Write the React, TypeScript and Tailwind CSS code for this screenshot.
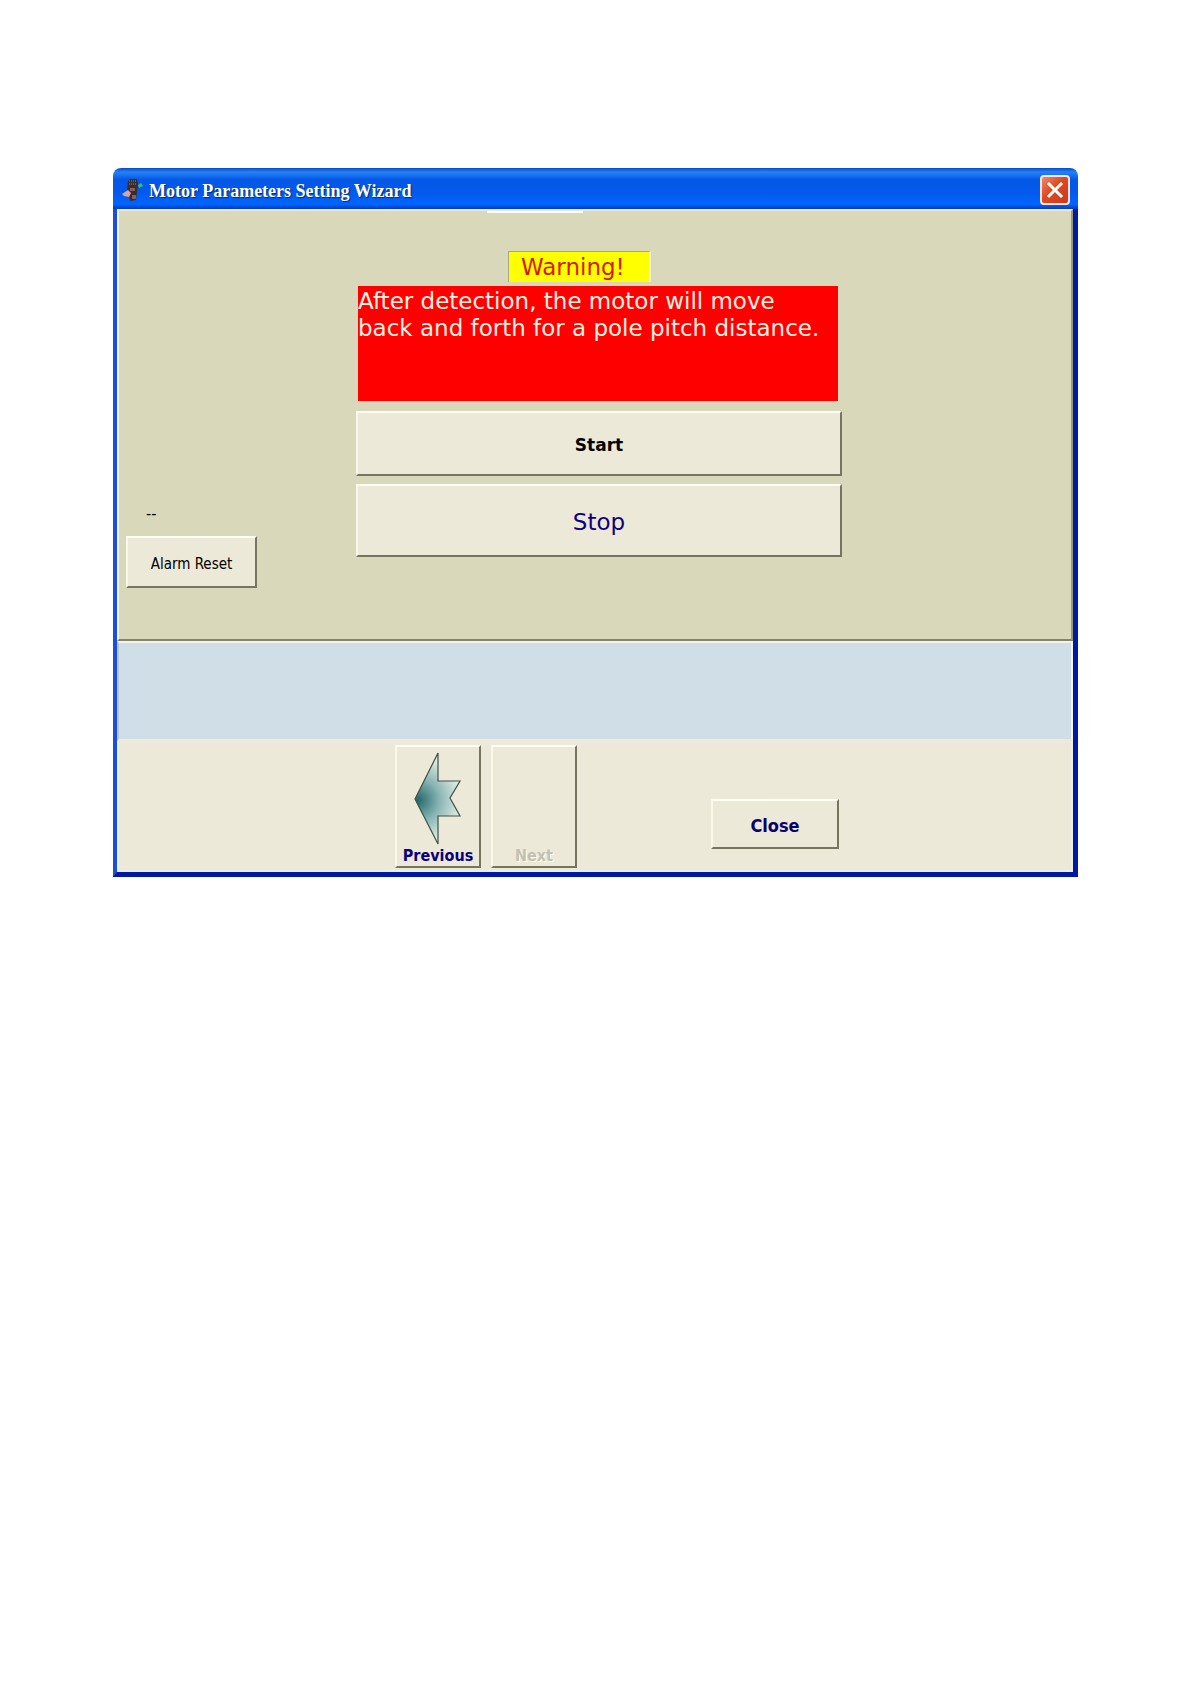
import { ButtonHTMLAttributes } from "react"
import clsx from "clsx"

function PanelButton({ className, children, ...props }: ButtonHTMLAttributes<HTMLButtonElement>) {
  return (
    <button
      type="button"
      className={clsx(
        "border-2 border-t-[#fffff4] border-l-[#fbf8e8] border-r-[#77745f] border-b-[#77745f] bg-[#ece9d8]",
        className
      )}
      {...props}
    >
      {children}
    </button>
  )
}

function MotorIcon() {
  return (
    <svg className="h-6 w-6" viewBox="0 0 24 24" aria-hidden="true">
      <path d="M7 2 9 0H16L17 5 15 21 9 22 8 14 6 11z" fill="#3a2b2e" />
      <path d="M8 2h7M8 5h7" stroke="#9b8c8c" strokeWidth="1" strokeDasharray="1 1" />
      <path d="M1 15 7 11 10 14 8 18 3 17z" fill="#d9a3a3" />
      <path d="M9 9h5v3H9zM11 16h4v4h-4z" fill="#84605c" />
      <path d="M17 6 20 4 22 7 18 9z" fill="#35c25b" />
    </svg>
  )
}

function PreviousArrow() {
  return (
    <svg className="h-24 w-12" viewBox="0 0 48 96" aria-hidden="true">
      <defs>
        <radialGradient id="arrowFill" gradientUnits="userSpaceOnUse" cx="4" cy="50" r="42">
          <stop offset="0" stopColor="#25686a" />
          <stop offset="0.5" stopColor="#86b3b4" />
          <stop offset="1" stopColor="#dce9df" />
        </radialGradient>
      </defs>
      <path
        d="M1 49 24 3V31H46L36 48 46 66H24V94z"
        fill="url(#arrowFill)"
        stroke="#3c5148"
        strokeWidth="1.2"
      />
    </svg>
  )
}

export default function App() {
  return (
    <main className="min-h-screen bg-white pt-[168px] pr-28 pl-[113px] font-['DejaVu_Sans_Condensed','DejaVu_Sans',sans-serif]">
      <section className="overflow-hidden rounded-t-lg">
        {/* Title bar */}
        <header className="flex h-[41px] items-center justify-between bg-linear-[180deg,#0848cf_0%,#2583f5_10%,#0558e6_28%,#0359ec_60%,#0066ff_88%,#003bc0_100%] px-2">
          <div className="flex items-center gap-1 pt-1">
            <MotorIcon />
            <h1 className="font-['Liberation_Serif',serif] text-lg font-bold text-white [text-shadow:1px_1px_1px_#062a7a]">
              Motor Parameters Setting Wizard
            </h1>
          </div>
          <button
            type="button"
            aria-label="Close window"
            className="mt-0.5 flex size-[30px] items-center justify-center rounded border-2 border-[#f5e4e2] bg-linear-[135deg,#ee8a6b,#dd4820_45%,#c93c1b]"
          >
            <svg className="size-5" viewBox="0 0 20 20" aria-hidden="true">
              <path d="M4 4 16 16M16 4 4 16" stroke="#fff" strokeWidth="3" strokeLinecap="square" />
            </svg>
          </button>
        </header>

        <div className="border-r-[5px] border-b-[5px] border-l-4 border-r-[#0019a0] border-b-[#0019a0] border-l-[#1c4fd8]">
          {/* Detection panel */}
          <div className="grid h-[432px] grid-cols-[230px_1fr_222px] border-2 border-t-[#eceadb] border-r-[#99987f] border-b-[#85846f] border-l-[#f4f5ea] bg-[#dad8ba] px-[7px]">
            <div className="flex flex-col items-start justify-end pb-[51px]">
              <p className="pb-3 pl-5 text-base leading-5">--</p>
              <PanelButton className="h-[52px] w-[131px] pt-1 text-[15px]">Alarm Reset</PanelButton>
            </div>
            <div className="flex flex-col">
              <div className="ml-[131px] h-0.5 w-24 bg-[#fbfbf0]" />
              <p className="mt-[38px] ml-[152px] h-[31px] w-[143px] border-t border-r-2 border-l border-t-[#a8a878] border-r-[#f0eee0] border-l-[#a8a878] bg-[#ffff00] pl-3 font-['DejaVu_Sans',sans-serif] text-[23px] leading-[30px] text-[#d81800]">
                Warning!
              </p>
              <p className="mt-1 mr-1 ml-0.5 h-[115px] bg-[#fe0000] pt-0.5 font-['DejaVu_Sans',sans-serif] text-[23px] leading-[27px] text-[#fff3e0]">
                After detection, the motor will move
                <br />
                back and forth for a pole pitch distance.
              </p>
              <PanelButton className="mt-2.5 h-[65px] pt-1 font-['DejaVu_Sans',sans-serif] text-[17px] font-bold text-black">
                Start
              </PanelButton>
              <PanelButton className="mt-2 h-[73px] pt-1 font-['DejaVu_Sans',sans-serif] text-[23px] text-[#100080]">
                Stop
              </PanelButton>
            </div>
          </div>

          {/* Message area */}
          <div className="h-[100px] border-2 border-t-[#f2f3ec] border-r-[#f2f3ec] border-b-[#eeeadb] border-l-[#b9c4c4] bg-[#d0dfe7]" />

          {/* Navigation */}
          <footer className="grid h-[131px] grid-cols-[276px_1fr_232px] border-r-2 border-b-2 border-l-2 border-[#e6f1ee] bg-[#ede9d8]">
            <div />
            <div className="flex justify-between pt-1">
              <div className="flex h-[123px] gap-2.5">
                <PanelButton className="flex w-[86px] flex-col items-center justify-end text-base leading-5 font-bold text-[#08007c]">
                  <PreviousArrow />
                  Previous
                </PanelButton>
                <PanelButton
                  disabled
                  className="flex w-[86px] flex-col items-center justify-end text-base leading-5 font-bold text-[#c4c0ae] [text-shadow:1px_1px_0_#fff]"
                >
                  Next
                </PanelButton>
              </div>
              <PanelButton className="mt-[54px] h-[50px] w-32 pt-1 text-lg leading-6 font-bold text-[#08006c]">
                Close
              </PanelButton>
            </div>
          </footer>
        </div>
      </section>
    </main>
  )
}
